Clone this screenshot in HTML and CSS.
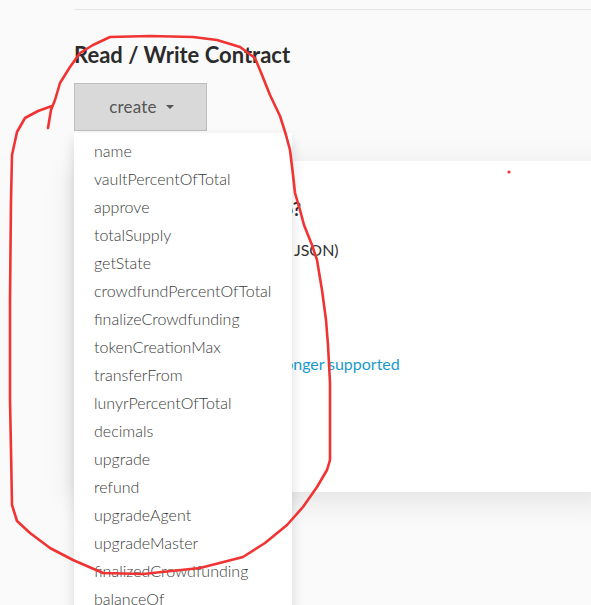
FILE: index.html
```html
<!DOCTYPE html>
<html>
<head>
<meta charset="utf-8">
<link rel="stylesheet" href="styles.css">
</head>
<body>
<div class="page">
  <div class="topline"></div>
  <h2 class="title">Read / Write Contract</h2>
  <div class="dropdown">
    <button class="btn">create <span class="caret"></span></button>
    <ul class="menu">
      <li>name</li>
      <li>vaultPercentOfTotal</li>
      <li>approve</li>
      <li>totalSupply</li>
      <li>getState</li>
      <li>crowdfundPercentOfTotal</li>
      <li>finalizeCrowdfunding</li>
      <li>tokenCreationMax</li>
      <li>transferFrom</li>
      <li>lunyrPercentOfTotal</li>
      <li>decimals</li>
      <li>upgrade</li>
      <li>refund</li>
      <li>upgradeAgent</li>
      <li>upgradeMaster</li>
      <li>finalizedCrowdfunding</li>
      <li>balanceOf</li>
    </ul>
  </div>
  <div class="card">
    <h3 class="card-title">What would you like to do?</h3>
    <p class="card-text">Select a wallet (or paste raw JSON)</p>
    <p class="card-link"><a href="#">Warning: this feature is no longer supported</a></p>
  </div>
</div>
<svg class="marker" width="591" height="605" viewBox="0 0 591 605">
  <path d="M48 128 L51 110 L55 100 L60 83 L70 67 L80 53 L93 45 L110 37 L150 36 L193 37 L217 40 L240 47 L255 58 L262 75 L270 95 L280 116 L286 135 L290 150 L293 175 L295 193 L300 210 L304 225 L312 245 L317 260 L322 290 L326 320 L328 345 L330 383 L330 420 L330 460 L327 470 L317 487 L303 507 L287 525 L265 543 L243 557 L200 568 L143 574 L103 573 L73 560 L50 548 L30 533 L17 521 L12 505 L11 450 L10 400 L10 300 L11 200 L12 155 L17 132 L25 118 L38 111 L52 106"/>
  <circle cx="509" cy="172" r="1.6"/>
</svg>
</body>
</html>
```
FILE: styles.css
```css
html, body {
  margin: 0;
  padding: 0;
}
body {
  background: #fafafa;
  font-family: Lato, "Open Sans", sans-serif;
  color: #333;
  width: 591px;
  height: 605px;
  overflow: hidden;
  position: relative;
}
.page {
  padding-left: 74px;
}
.topline {
  height: 9px;
  border-bottom: 1px solid #e6e6e6;
}
.title {
  margin: 32px 0 15px;
  font-size: 22px;
  line-height: 26px;
  font-weight: 700;
  color: #2b2b2b;
}
.dropdown {
  position: relative;
  width: 133px;
}
.btn {
  display: flex;
  align-items: center;
  justify-content: center;
  gap: 9px;
  width: 133px;
  height: 48px;
  box-sizing: border-box;
  border: 1px solid #bdbdbd;
  background: #d9d9d9;
  font-family: Lato, sans-serif;
  font-size: 17px;
  font-weight: 400;
  letter-spacing: 0.2px;
  color: #555;
  padding: 0 0 2px 2px;
  margin: 0;
}
.caret {
  width: 0;
  height: 0;
  border-left: 4px solid transparent;
  border-right: 4px solid transparent;
  border-top: 4px solid #555;
  margin-top: 2px;
}
.menu {
  position: absolute;
  left: 0;
  top: 50px;
  z-index: 5;
  margin: 0;
  padding: 4px 0 6px;
  width: 218px;
  list-style: none;
  background: #fff;
  box-shadow: 0 6px 12px rgba(0, 0, 0, 0.14);
}
.menu li {
  padding-left: 20px;
  height: 28px;
  line-height: 28px;
  font-size: 16px;
  font-weight: 300;
  color: #3a3a3a;
  white-space: nowrap;
}
.card {
  margin-top: 30px;
  margin-right: -20px;
  background: #fff;
  height: 331px;
  box-sizing: border-box;
  padding: 36px 20px 0 20px;
  box-shadow: 0 8px 30px rgba(0, 0, 0, 0.1);
}
.card-title {
  margin: 0;
  font-size: 18px;
  line-height: 24px;
  font-weight: 700;
  word-spacing: -2.2px;
  color: #2b2b2b;
}
.card-text {
  margin: 17px 0 0;
  font-size: 16px;
  line-height: 24px;
  word-spacing: 0.2px;
}
.card-link {
  margin: 90px 0 0;
  font-size: 16px;
  line-height: 24px;
  word-spacing: -0.4px;
}
.card-link a {
  color: #1a9acb;
  text-decoration: none;
}
.marker {
  position: absolute;
  left: 0;
  top: 0;
  z-index: 10;
  pointer-events: none;
}
.marker path {
  fill: none;
  stroke: #f03333;
  stroke-width: 2.6;
  stroke-linejoin: round;
  stroke-linecap: round;
}
.marker circle {
  fill: #f03333;
}
```
